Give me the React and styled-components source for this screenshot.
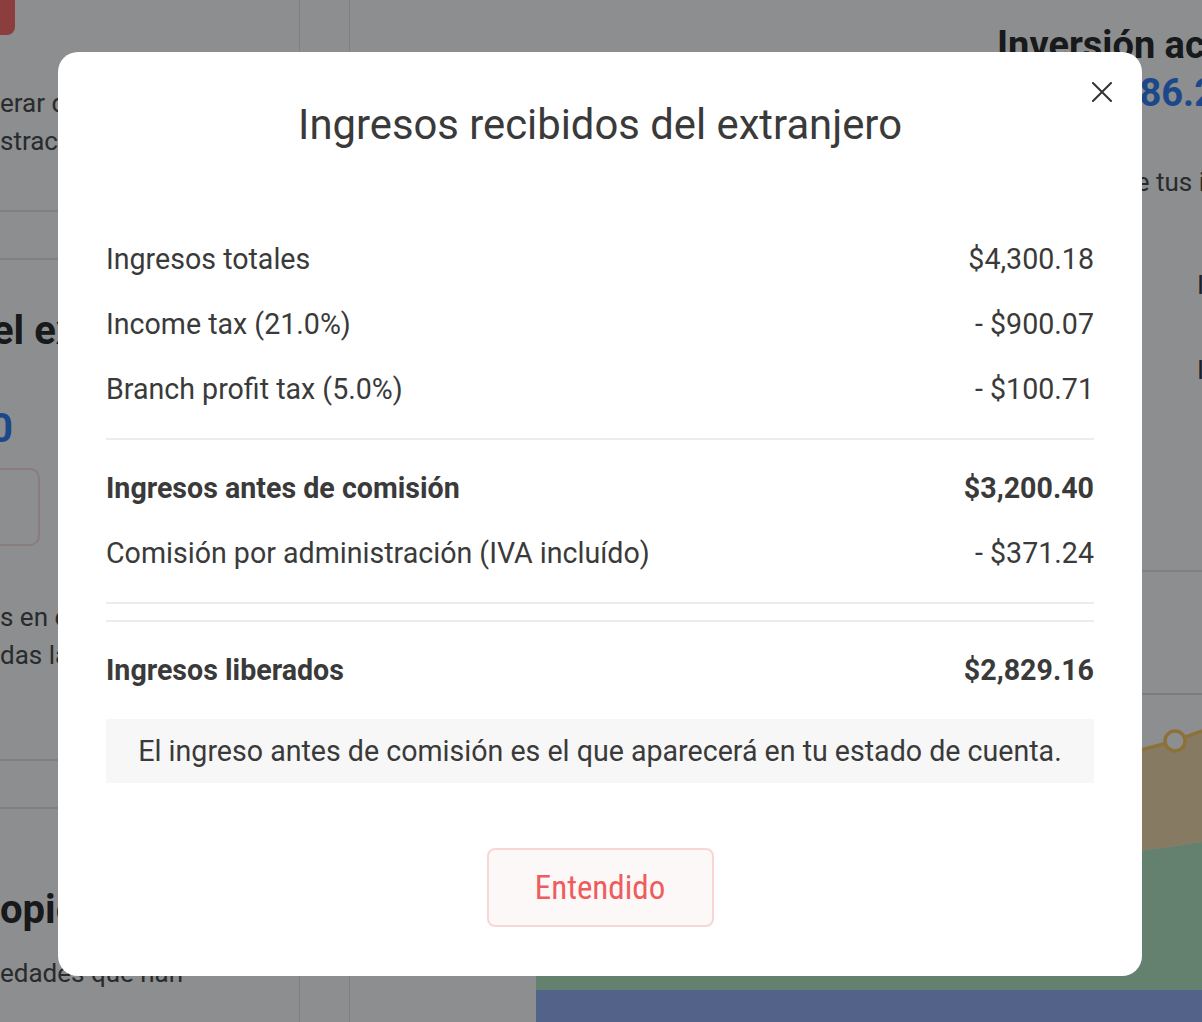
import React from 'react';
import styled, { createGlobalStyle } from 'styled-components';

const GlobalStyle = createGlobalStyle`
  html, body { margin: 0; padding: 0; }
  body {
    font-family: Roboto, "Liberation Sans", Arial, sans-serif;
    background: #fff;
    color: #333;
    overflow: hidden;
  }
  * { box-sizing: border-box; }
`;

/* ---------- page behind the modal ---------- */

const Page = styled.div`
  display: grid;
  grid-template-columns: 300px 50px 1fr;
  height: 1022px;
  overflow: hidden;
`;

const Sidebar = styled.aside`
  display: flex;
  flex-direction: column;
  border-right: 1px solid #e4e6e9;
  overflow: hidden;
  white-space: nowrap;
`;

const RedTab = styled.div`
  width: 15px;
  height: 35px;
  background: #ff6666;
  border-radius: 0 0 8px 0;
`;

const SideText = styled.p`
  margin: ${(p) => p.$top}px 0 0;
  font-size: 26px;
  line-height: 38px;
  color: #444;
`;

const Band = styled.div`
  height: 50px;
  margin-top: ${(p) => p.$top}px;
  border-top: 2px solid #e4e6e9;
  border-bottom: 2px solid #e4e6e9;
`;

const SideHeading = styled.h3`
  margin: ${(p) => p.$top}px 0 0 ${(p) => p.$shift || 0}px;
  font-size: 40px;
  line-height: 48px;
  font-weight: 700;
  color: #222;
`;

const SideAmount = styled.div`
  margin: 50px 0 0 -10px;
  font-size: 40px;
  line-height: 48px;
  font-weight: 700;
  color: #2d7bf4;
`;

const OutlineBox = styled.div`
  width: 40px;
  height: 78px;
  margin-top: 15px;
  border: 2px solid #fbdedb;
  border-left: none;
  border-radius: 0 10px 10px 0;
`;

const Gutter = styled.div`
  border-right: 1px solid #e4e6e9;
`;

const Main = styled.main`
  display: flex;
  flex-direction: column;
  overflow: hidden;
  white-space: nowrap;
`;

const Summary = styled.section`
  height: 572px;
  padding: 23px 0 0 647px;
  border-bottom: 2px solid #e4e6e9;
`;

const SummaryTitle = styled.h2`
  margin: 0;
  font-size: 38px;
  line-height: 44px;
  font-weight: 700;
  color: #222;
`;

const SummaryValue = styled.div`
  margin: 4px 0 0 -7px;
  font-size: 38px;
  line-height: 44px;
  font-weight: 700;
  color: #2d7bf4;
`;

const SummaryNote = styled.p`
  margin: 48px 0 0 -56px;
  font-size: 26px;
  line-height: 38px;
  color: #444;
`;

const Legend = styled.ul`
  list-style: none;
  margin: 65px 0 0 200px;
  padding: 0;
  display: flex;
  flex-direction: column;
  gap: 47px;
  font-size: 26px;
  line-height: 38px;
  color: #333;
`;

const ChartWrap = styled.div`
  margin-left: 186px;
  height: 450px;
  svg { display: block; }
`;

const orangePts = [
  [15, 336],
  [171, 300],
  [327, 255],
  [483, 210],
  [639, 169],
  [666, 159],
];

const Chart = () => {
  const line = orangePts.map(([x, y]) => `${x},${y}`).join(' ');
  const greenTop = 'M0,390 L171,352 L327,318 L483,296 L639,274 L666,270';
  return (
    <svg width="666" height="450" viewBox="0 0 666 450">
      {[122, 242, 364].map((y) => (
        <line key={y} x1="0" x2="666" y1={y} y2={y} stroke="#dadde1" strokeWidth="2" />
      ))}
      <path
        d={`M0,340 L${line.replace(/ /g, ' L')} L666,270 L639,274 L483,296 L327,318 L171,352 L0,390 Z`}
        fill="#f6daad"
      />
      <path d={`${greenTop} L666,418 L0,418 Z`} fill="#b4e5c3" />
      <rect x="0" y="418" width="666" height="32" fill="#92acf4" />
      <polyline points={`0,340 ${line}`} fill="none" stroke="#ffc95c" strokeWidth="3.5" />
      {orangePts.slice(0, 5).map(([x, y]) => (
        <circle key={x} cx={x} cy={y} r="10" fill="#fff" stroke="#ffc95c" strokeWidth="3.5" />
      ))}
    </svg>
  );
};

/* ---------- modal ---------- */

const Overlay = styled.div`
  position: fixed;
  inset: 0;
  background: rgba(10, 14, 18, 0.47);
  display: flex;
  align-items: flex-start;
  padding: 52px 0 0 58px;
`;

const Modal = styled.div`
  position: relative;
  width: 1084px;
  background: #fff;
  border-radius: 20px;
  padding: 49px 48px 49px;
  display: flex;
  flex-direction: column;
  color: #3a3a3a;
`;

const CloseButton = styled.button`
  position: absolute;
  top: 30px;
  right: 30px;
  width: 20px;
  height: 20px;
  padding: 0;
  border: none;
  background: none;
  cursor: pointer;
  svg { display: block; }
`;

const Title = styled.h2`
  margin: 0;
  font-size: 41.8px;
  line-height: 48px;
  font-weight: 400;
  text-align: center;
`;

const Breakdown = styled.div`
  margin-top: 78px;
  display: flex;
  flex-direction: column;
`;

const Row = styled.div`
  display: flex;
  justify-content: space-between;
  padding: 16px 0;
  font-size: 28.6px;
  line-height: 33px;
  font-weight: ${(p) => (p.$bold ? 700 : 400)};
`;

const Divider = styled.hr`
  margin: 16px 0 ${(p) => (p.$tight ? 0 : 16)}px;
  border: none;
  height: 2px;
  background: #ececec;
`;

const Note = styled.p`
  margin: 16px 0 0;
  padding: 16px;
  background: #f7f7f7;
  font-size: 28.6px;
  line-height: 32px;
  text-align: center;
`;

const ConfirmButton = styled.button`
  align-self: center;
  margin-top: 65px;
  width: 227px;
  height: 79px;
  border: 2px solid #f9d6d6;
  border-radius: 8px;
  background: #fdf8f8;
  color: #ee5d5d;
  font-family: Roboto, "Liberation Sans", sans-serif;
  font-size: 33px;
  font-stretch: condensed;
  cursor: pointer;
`;

const rows = [
  { label: 'Ingresos totales', value: '$4,300.18' },
  { label: 'Income tax (21.0%)', value: '- $900.07' },
  { label: 'Branch profit tax (5.0%)', value: '- $100.71' },
];

export default function App() {
  return (
    <>
      <GlobalStyle />
      <Page>
        <Sidebar>
          <RedTab />
          <SideText $top={49}>
            erar dividendos en
            <br />
            stración de tu cuenta
          </SideText>
          <Band $top={50} />
          <SideHeading $top={47} $shift={-8}>el extranjero</SideHeading>
          <SideAmount>0</SideAmount>
          <OutlineBox />
          <SideText $top={52}>
            s en el extranjero
            <br />
            das las propiedades
          </SideText>
          <Band $top={85} />
          <SideHeading $top={77}>opiedades</SideHeading>
          <SideText $top={20}>edades que han</SideText>
        </Sidebar>
        <Gutter />
        <Main>
          <Summary>
            <SummaryTitle>Inversión actual</SummaryTitle>
            <SummaryValue>$1,212,386.25</SummaryValue>
            <SummaryNote>Este es el valor de tus inversiones</SummaryNote>
            <Legend>
              <li>Ingresos</li>
              <li>Impuestos</li>
            </Legend>
          </Summary>
          <ChartWrap>
            <Chart />
          </ChartWrap>
        </Main>
      </Page>

      <Overlay>
        <Modal>
          <CloseButton aria-label="Cerrar">
            <svg width="20" height="20" viewBox="0 0 20 20">
              <path d="M1 1 L19 19 M19 1 L1 19" stroke="#333" strokeWidth="2" strokeLinecap="round" />
            </svg>
          </CloseButton>
          <Title>Ingresos recibidos del extranjero</Title>
          <Breakdown>
            {rows.map((r) => (
              <Row key={r.label}>
                <span>{r.label}</span>
                <span>{r.value}</span>
              </Row>
            ))}
            <Divider />
            <Row $bold>
              <span>Ingresos antes de comisión</span>
              <span>$3,200.40</span>
            </Row>
            <Row>
              <span>Comisión por administración (IVA incluído)</span>
              <span>- $371.24</span>
            </Row>
            <Divider $tight />
            <Divider />
            <Row $bold>
              <span>Ingresos liberados</span>
              <span>$2,829.16</span>
            </Row>
            <Note>El ingreso antes de comisión es el que aparecerá en tu estado de cuenta.</Note>
          </Breakdown>
          <ConfirmButton>Entendido</ConfirmButton>
        </Modal>
      </Overlay>
    </>
  );
}
